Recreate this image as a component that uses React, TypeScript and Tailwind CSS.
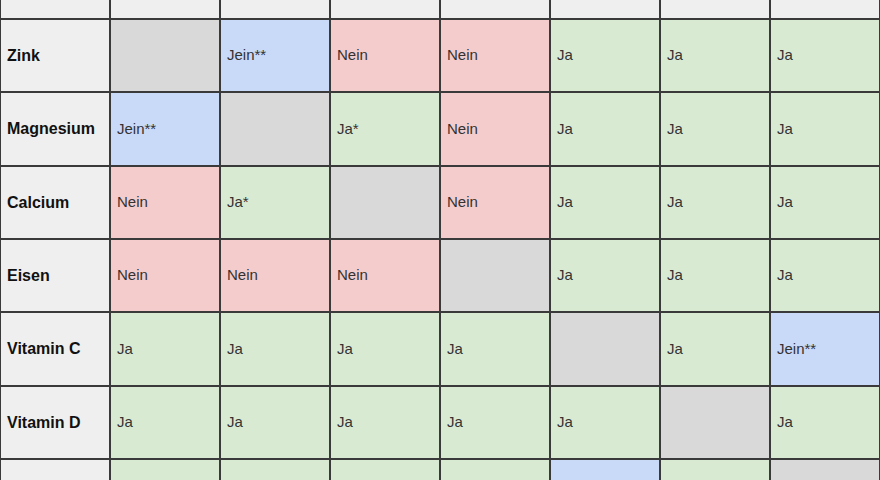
type Cell = "gray" | "ja" | "nein" | "jein" | "jastar";

const rows: { label: string; cells: Cell[] }[] = [
  { label: "Zink", cells: ["gray", "jein", "nein", "nein", "ja", "ja", "ja"] },
  { label: "Magnesium", cells: ["jein", "gray", "jastar", "nein", "ja", "ja", "ja"] },
  { label: "Calcium", cells: ["nein", "jastar", "gray", "nein", "ja", "ja", "ja"] },
  { label: "Eisen", cells: ["nein", "nein", "nein", "gray", "ja", "ja", "ja"] },
  { label: "Vitamin C", cells: ["ja", "ja", "ja", "ja", "gray", "ja", "jein"] },
  { label: "Vitamin D", cells: ["ja", "ja", "ja", "ja", "ja", "gray", "ja"] },
];

// bottom row is cut off by the frame, only colours show
const lastRow = ["bg-[#d9ead3]", "bg-[#d9ead3]", "bg-[#d9ead3]", "bg-[#d9ead3]", "bg-[#c9daf8]", "bg-[#d9ead3]", "bg-[#d9d9d9]"];

const cellStyle: Record<Cell, { bg: string; text: string }> = {
  gray: { bg: "bg-[#d9d9d9]", text: "" },
  ja: { bg: "bg-[#d9ead3]", text: "Ja" },
  jastar: { bg: "bg-[#d9ead3]", text: "Ja*" },
  nein: { bg: "bg-[#f4cccc]", text: "Nein" },
  jein: { bg: "bg-[#c9daf8]", text: "Jein**" },
};

const rowHeights = ["h-[71px]", "h-[72px]", "h-[71px]", "h-[71px]", "h-[72px]", "h-[71px]"];

export default function App() {
  return (
    <div
      className="w-[880px] h-[480px] overflow-hidden bg-[#3a3a3a] px-[1px]"
      style={{ fontFamily: '"Liberation Sans", Arial, sans-serif' }}
    >
      <div className="grid grid-cols-[repeat(8,108px)] gap-[2px]">
        {/* header row, mostly out of frame */}
        {Array.from({ length: 8 }).map((_, i) => (
          <div key={i} className="h-[18px] bg-[#efefef]" />
        ))}

        {rows.map((row, r) => (
          <>
            <div
              key={row.label}
              className={`${rowHeights[r]} bg-[#efefef] flex items-center pl-[6px] text-[16px] font-bold text-[#111111]`}
            >
              {row.label}
            </div>
            {row.cells.map((c, i) => (
              <div
                key={row.label + i}
                className={`${rowHeights[r]} ${cellStyle[c].bg} flex items-center pl-[6px] text-[15px] text-[#333333]`}
              >
                {cellStyle[c].text}
              </div>
            ))}
          </>
        ))}

        <div className="h-[30px] bg-[#efefef]" />
        {lastRow.map((bg, i) => (
          <div key={i} className={`h-[30px] ${bg}`} />
        ))}
      </div>
    </div>
  );
}
